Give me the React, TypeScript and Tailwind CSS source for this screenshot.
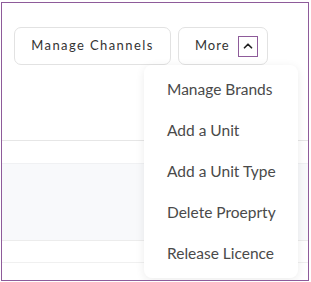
import { ChevronUp } from 'lucide-react';

const menuItems = ['Manage Brands', 'Add a Unit', 'Add a Unit Type', 'Delete Proeprty', 'Release Licence'];

export default function App() {
  return (
    <div className="w-[311px] h-[282px] bg-white pt-[2px] pl-[1px]" style={{ fontFamily: 'Lato, "Open Sans", sans-serif' }}>
      <div className="relative w-[308px] h-[279px] border border-[#8e5b9a] overflow-hidden">
        <div className="flex gap-[7px] pl-[12px] pt-[24px]">
          <button className="h-[38px] w-[157px] rounded-[7px] border border-[#e2e2e2] bg-white text-[13px] tracking-[1.4px] text-[#333]">
            Manage Channels
          </button>
          <button className="h-[38px] w-[90px] rounded-[7px] border border-[#e2e2e2] bg-white flex items-center pl-[16px] gap-[8px] text-[13px] tracking-[1px] text-[#333]">
            More
            <span className="w-[20px] h-[21px] border border-[#8e5b9a] flex items-center justify-center">
              <ChevronUp className="w-[14px] h-[14px] text-[#222]" strokeWidth={3} />
            </span>
          </button>
        </div>

        <div className="mt-[75px] border-t border-[#e6e6e6]" />
        <div className="mt-[22px] h-[77px] bg-[#f8f9fb] border-t border-[#f0f1f3]" />
        <div className="h-[22px] border-t border-[#ececec]" />
        <div className="border-t border-[#f0f0f0]" />

        <div className="absolute left-[142px] top-[62px] w-[154px] h-[213px] bg-white rounded-[8px] shadow-[0_2px_10px_rgba(0,0,0,0.08)] py-[4px]">
          {menuItems.map((item) => (
            <div key={item} className="h-[41px] flex items-center pl-[23px] text-[15.5px] text-[#4a4a4a]">
              {item}
            </div>
          ))}
        </div>
      </div>
    </div>
  );
}
